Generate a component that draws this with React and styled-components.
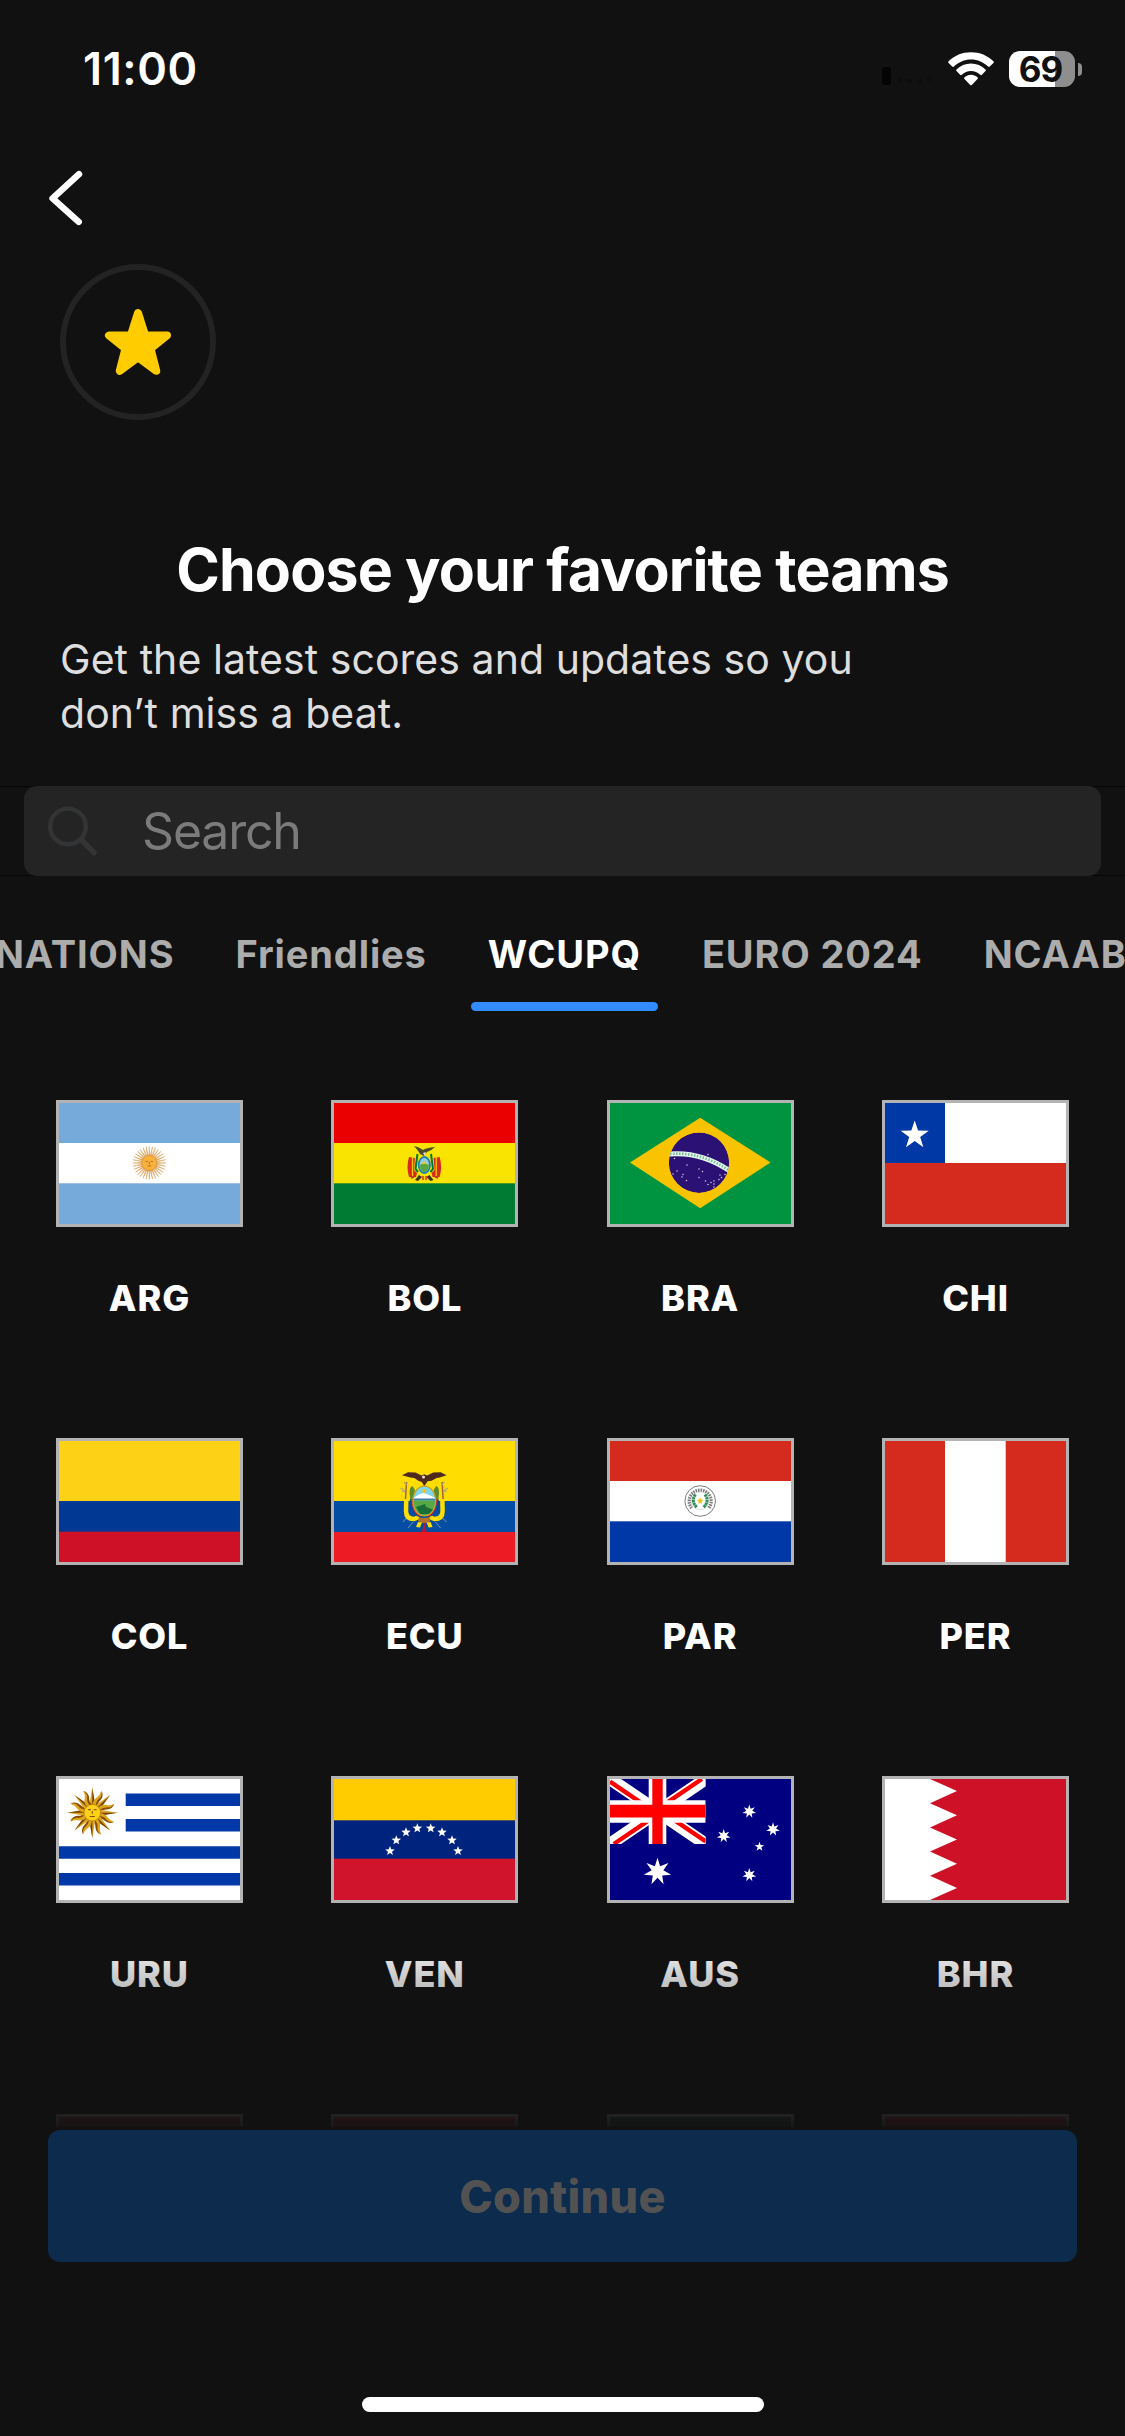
import styled, { createGlobalStyle, css } from "styled-components";

const GlobalStyle = createGlobalStyle`
  * {
    box-sizing: border-box;
  }
  body {
    margin: 0;
    background: #111111;
    font-family: Inter, "Liberation Sans", sans-serif;
  }
`;

const Screen = styled.div`
  display: flex;
  flex-direction: column;
  width: 1125px;
  height: 2436px;
  overflow: hidden;
  background: #111111;
  color: #ffffff;
`;

const StatusBar = styled.header`
  display: flex;
  align-items: center;
  justify-content: space-between;
  height: 138px;
  flex: none;
  padding: 0 43px 0 83px;
`;

const Time = styled.div`
  font-size: 45px;
  font-weight: 600;
  line-height: 54px;
  letter-spacing: 0.6px;
`;

const StatusIcons = styled.div`
  display: flex;
  align-items: center;
`;

const Battery = styled.div`
  display: flex;
  align-items: center;
  justify-content: center;
  width: 66px;
  height: 36px;
  margin-left: 15px;
  padding-right: 3px;
  border-radius: 11px;
  background: linear-gradient(to right, #ffffff 46px, #8e8e8e 46px);
  color: #111111;
  font-size: 35px;
  font-weight: 700;
  line-height: 36px;
  letter-spacing: -1px;
`;

const BatteryNub = styled.div`
  width: 4px;
  height: 13px;
  margin-left: 3px;
  border-radius: 0 4px 4px 0;
  background: #8e8e8e;
`;

const NavRow = styled.nav`
  display: flex;
  align-items: center;
  height: 120px;
  flex: none;
  padding-left: 45px;
`;

const StarBadge = styled.div`
  display: flex;
  align-items: center;
  justify-content: center;
  width: 156px;
  height: 156px;
  flex: none;
  margin: 6px 0 0 60px;
  border: 6px solid #232323;
  border-radius: 50%;
`;

const Title = styled.h1`
  margin: 114px 0 0;
  text-align: center;
  font-size: 59px;
  font-weight: 700;
  line-height: 72px;
  letter-spacing: -0.85px;
  white-space: nowrap;
`;

const Subtitle = styled.p`
  width: 840px;
  margin: 26px 0 0 60px;
  color: #dedede;
  font-size: 41px;
  font-weight: 400;
  line-height: 54px;
  letter-spacing: 0.05px;
`;

const SearchRow = styled.div`
  flex: none;
  height: 90px;
  margin-top: 46px;
  padding: 0 24px;
  background: linear-gradient(#060606 0 1px, #111111 1px 89px, #060606 89px);
`;

const SearchField = styled.div`
  display: flex;
  align-items: center;
  gap: 44px;
  height: 90px;
  padding-left: 23px;
  border-radius: 13px;
  background: #242424;
  color: #7b7b7b;
  font-size: 50px;
  line-height: 90px;
  letter-spacing: -1.2px;
`;

const Tabs = styled.div`
  display: flex;
  gap: 27px;
  flex: none;
  height: 88px;
  margin: 47px 0 0 -22px;
`;

const Tab = styled.div`
  display: flex;
  flex-direction: column;
  justify-content: space-between;
  align-items: center;
  flex: none;
  padding: 0 17px;
  color: #acacac;
  font-size: 38px;
  font-weight: 700;
  line-height: 62px;
  letter-spacing: 0.9px;
  white-space: nowrap;
  ${({ $active }) =>
    $active &&
    css`
      color: #ffffff;
      &::after {
        content: "";
        align-self: stretch;
        height: 9px;
        margin: 0 -17px;
        border-radius: 5px;
        background: #328cff;
      }
    `}
`;

const TeamList = styled.main`
  position: relative;
  flex: none;
  height: 1119px;
  padding: 89px 56px 0;
  overflow: hidden;
  &::after {
    content: "";
    position: absolute;
    left: 0;
    right: 0;
    bottom: 0;
    height: 196px;
    background: linear-gradient(rgba(17, 17, 17, 0), rgba(17, 17, 17, 0.96) 193px, #111111 193px);
  }
`;

const TeamGrid = styled.div`
  display: grid;
  grid-template-columns: repeat(4, 187px);
  grid-auto-rows: 338px;
  justify-content: space-between;
`;

const Team = styled.div`
  display: flex;
  flex-direction: column;
  align-items: center;
`;

const TeamName = styled.div`
  margin-top: 51px;
  font-size: 36px;
  font-weight: 800;
  line-height: 40px;
  letter-spacing: 0.9px;
`;

const Footer = styled.footer`
  display: flex;
  flex-direction: column;
  align-items: center;
  justify-content: space-between;
  flex: 1;
  padding: 0 48px 24px;
`;

const ContinueButton = styled.button`
  width: 100%;
  height: 132px;
  border: 0;
  border-radius: 12px;
  background: #0d2b4d;
  color: #525252;
  font: inherit;
  font-size: 45px;
  font-weight: 800;
  letter-spacing: 0.3px;
`;

const HomeIndicator = styled.div`
  width: 402px;
  height: 15px;
  border-radius: 8px;
  background: #ffffff;
`;

const starPoints = (cx, cy, outer, inner, tips = 5) =>
  Array.from({ length: tips * 2 }, (_, i) => {
    const r = i % 2 ? inner : outer;
    const a = (Math.PI * i) / tips - Math.PI / 2;
    return `${(cx + r * Math.cos(a)).toFixed(2)},${(cy + r * Math.sin(a)).toFixed(2)}`;
  }).join(" ");

const Star = ({ x, y, r, inner = r * 0.39, tips = 5, fill = "#fff" }) => (
  <polygon points={starPoints(x, y, r, inner, tips)} fill={fill} />
);

const Bands = ({ colors, stops }) =>
  colors.map((fill, i) => (
    <rect key={i} x="0" y={stops[i]} width="187" height={127 - stops[i]} fill={fill} />
  ));

const Argentina = () => (
  <>
    <Bands colors={["#75aadb", "#ffffff", "#75aadb"]} stops={[0, 43, 83.3]} />
    {Array.from({ length: 32 }, (_, i) => (
      <path
        key={i}
        d="M92.8 56L93.3 46.5L93.8 56Z"
        fill="#e0a050"
        stroke="#e0a565"
        strokeWidth="0.5"
        transform={`rotate(${i * 11.25} 93.3 63)`}
      />
    ))}
    <circle cx="93.3" cy="63" r="7.6" fill="#f8b23c" stroke="#d99a45" strokeWidth="1" />
    <path d="M89.6 61.4h2.4M94.6 61.4h2.4M93.3 62v2.4M91.4 66h3.8" stroke="#b5702a" strokeWidth="1" />
  </>
);

const Bolivia = () => (
  <>
    <Bands colors={["#ea0000", "#f9e300", "#007b33"]} stops={[0, 43, 83.3]} />
    <path d="M78 57q-3 10 0 20h7l1-4-3-3 1-12z" fill="#d52b1e" />
    <path d="M108.6 57q3 10 0 20h-7l-1-4 3-3-1-12z" fill="#d52b1e" />
    <path d="M81.5 57v19M105.2 57v19" stroke="#f9c800" strokeWidth="1.3" />
    <path d="M86.5 54l-2 15 2.5 3M100 54l2 15-2.5 3" stroke="#007b33" strokeWidth="2" fill="none" />
    <path d="M83 46q5 1 9 4 3-2 12-3-4 4-8 5l-3 4-4-2q-2-4-6-8z" fill="#4b4a2c" />
    <path d="M92 53l3-1-1 4z" fill="#e8e8e8" />
    <ellipse cx="93.3" cy="65" rx="6.5" ry="9" fill="#1d7fb8" />
    <ellipse cx="93.3" cy="65" rx="4.8" ry="7" fill="#8fd0e8" />
    <path d="M88.7 65q4-3 9.2 0-.5 7-4.6 7t-4.6-7z" fill="#58a63c" />
    <path d="M90 64l3-3 3 3z" fill="#e9c832" />
    <path d="M84 80l4-5 3 2-4 4zM102.5 80l-4-5-3 2 4 4z" fill="#3c3420" />
    <path d="M92 76v4M95 76v4M80 78l3-1M107 78l-3-1" stroke="#d52b1e" strokeWidth="1.5" />
  </>
);

const brazilStars = [
  [67.5, 58.5], [70, 71], [66, 74], [76, 74.5], [80, 65], [79.5, 80.5], [75, 77], [92, 69], [95.5, 71.5],
  [92, 77.5], [98.5, 81], [101, 84.5], [104, 82.5], [107, 81], [107, 84], [107, 87], [113, 75], [114.5, 77.5],
  [112, 79.5], [118, 74.5], [101, 54.5],
];

const Brazil = () => (
  <>
    <rect width="187" height="127" fill="#009440" />
    <polygon points="23,62.5 93.2,17.7 163.5,62.5 93.2,108.3" fill="#fac300" />
    <clipPath id="globe">
      <circle cx="92" cy="62.7" r="30.2" />
    </clipPath>
    <g clipPath="url(#globe)">
      <circle cx="92" cy="62.7" r="30.2" fill="#2b1173" />
      <path d="M60 54.2Q94 50.5 124 71.8" fill="none" stroke="#e9f5ee" strokeWidth="5" />
      <path
        d="M60 54.2Q94 50.5 124 71.8"
        fill="none"
        stroke="#6fbf95"
        strokeWidth="2.6"
        strokeDasharray="1.5 1.5"
      />
    </g>
    {brazilStars.map(([x, y]) => (
      <circle key={`${x}-${y}`} cx={x} cy={y} r="0.75" fill="#d8d0ee" />
    ))}
  </>
);

const Chile = () => (
  <>
    <Bands colors={["#ffffff", "#d52b1e"]} stops={[0, 63]} />
    <rect width="63" height="63" fill="#0039a6" />
    <Star x={32.7} y={35.2} r={14.8} />
  </>
);

const Colombia = () => (
  <Bands colors={["#fcd116", "#003893", "#ce1126"]} stops={[0, 63, 93.7]} />
);

const Ecuador = () => (
  <>
    <Bands colors={["#ffdd00", "#034ea2", "#ed1c24"]} stops={[0, 63, 94]} />
    <path d="M82 84l-5 6M104.5 84l5 6M76 79l-4 5M110.5 79l5 5" stroke="#8899aa" strokeWidth="0.9" />
    <path
      d="M75.5 50l-.5 23q0 8 8 8l5-2M111.1 50l.5 23q0 8-8 8l-5-2"
      fill="none"
      stroke="#ffdd00"
      strokeWidth="4.5"
    />
    <path d="M80.5 60q-4 13 8 18M106 60q4 13-8 18" fill="none" stroke="#034ea2" strokeWidth="2.2" />
    <path d="M81.5 60q0 14 8 18M105 60q0 14-8 18" fill="none" stroke="#e01b2a" strokeWidth="2.4" />
    <path d="M78.5 55q0-6 3-7l2.5 4-2 9-2.5 1zM108.1 55q0-6-3-7l-2.5 4 2 9 2.5 1z" fill="#5d8a2d" />
    <path d="M75.5 44l-1 17M111.1 44l1 17" stroke="#a5623a" strokeWidth="1.5" />
    <path
      d="M69.5 50l5 3M117.1 50l-5 3M73 44l3 3M113.6 44l-3 3M71 53l3 1M115.6 53l-3 1"
      stroke="#a9a58a"
      strokeWidth="1.1"
    />
    <path
      d="M71 37.3l6-3 7.5 .3 6 2.8 2.8-1.2 2.8 1.2 6-2.8 7.5-.3 6 3-7 2.2-3 .4-5 2.8-4 .5-3.3 5-2.5-4.3-3.5-1.2-4-2.8-4-.4z"
      fill="#4e2a1c"
    />
    <circle cx="92.5" cy="39" r="1.6" fill="#e8d9c8" />
    <ellipse cx="93.3" cy="63" rx="12" ry="15.5" fill="#c9a11d" />
    <clipPath id="shield">
      <ellipse cx="93.3" cy="63" rx="10.7" ry="14.2" />
    </clipPath>
    <g clipPath="url(#shield)">
      <rect x="80" y="48" width="27" height="32" fill="#7fd6ee" />
      <path d="M80 61l9-5 4-1 5 2 9 4z" fill="#ffffff" />
      <rect x="80" y="60.5" width="27" height="2" fill="#3e7fa8" />
      <rect x="80" y="62.5" width="27" height="18" fill="#57a943" />
      <path d="M85 69l9-3 1 3 8 3-2 4H89z" fill="#186e35" />
      <circle cx="93.3" cy="53" r="2" fill="#f2c31b" />
    </g>
    <path d="M88 79q5 2 10.5 0l1 4-4 2h-4.5l-4-2z" fill="#b5702a" />
    <path d="M87 84l-2 5 4 .5 2-5zM99.6 84l2 5-4 .5-2-5z" fill="#ffdd00" />
    <path d="M93.3 84l-2.5 10h5z" fill="#b01a36" />
  </>
);

const Paraguay = () => (
  <>
    <Bands colors={["#d52b1e", "#ffffff", "#0038a8"]} stops={[0, 43, 83.3]} />
    <circle cx="93.2" cy="63" r="15.3" fill="#ffffff" stroke="#6e6e6e" strokeWidth="0.9" />
    <path
      d="M84.7 70.1A11 11 0 1 1 101.7 70.1"
      fill="none"
      stroke="#7c7c7c"
      strokeWidth="3.2"
      strokeDasharray="1.6 0.9"
    />
    <circle cx="93.2" cy="63" r="8.8" fill="#ffffff" stroke="#c0c0c0" strokeWidth="0.5" />
    <path
      d="M88.5 56.5q-5 6.5 1.5 13M97.9 56.5q5 6.5-1.5 13"
      fill="none"
      stroke="#2f8f5b"
      strokeWidth="3"
      strokeDasharray="2.5 .4"
    />
    <Star x={93.2} y={63} r={3.4} inner={1.7} fill="#f2c31b" />
  </>
);

const Peru = () => (
  <>
    <rect width="187" height="127" fill="#d52b1e" />
    <rect x="63" width="60.7" height="127" fill="#ffffff" />
  </>
);

const Uruguay = () => (
  <>
    <rect width="187" height="127" fill="#ffffff" />
    <path d="M69.7 23.7H187M69.7 49.3H187M0 76.4H187M0 103.3H187" stroke="#0038a8" strokeWidth="12.5" />
    {Array.from({ length: 8 }, (_, i) => (
      <g key={i}>
        <g transform={`rotate(${i * 45} 36.3 36.7)`}>
          <path d="M33.3 29.5L36.3 11.5L39.3 29.5Z" fill="#dba51c" />
          <path d="M36.3 29.5V11.5L39.3 29.5Z" fill="#7b3f00" />
        </g>
        <g transform={`rotate(${i * 45 + 22.5} 36.3 36.7)`}>
          <path d="M33.8 29.5q-2-5 1-9 2-3 1.5-7.5 4 4 2 9-2 4 .5 7.5z" fill="#dba51c" />
          <path d="M37 29.5q-2-5 .5-9 1.5-3-.8-7.5 4 4 2.3 9-2 4 .5 7.5z" fill="#8a4c05" />
        </g>
      </g>
    ))}
    <circle cx="36.3" cy="36.7" r="8.3" fill="#fcd116" stroke="#b57a12" strokeWidth="0.7" />
    <path d="M32 33.7h3M37.7 33.7h3M33.8 40.5h5M36.3 35v3" stroke="#8a4c05" strokeWidth="1" />
  </>
);

const venezuelaStars = [
  [59, 75], [65.3, 64.3], [75, 56.3], [86.3, 52.3],
  [99.7, 52.3], [111, 56.3], [121, 64.3], [127, 75],
];

const Venezuela = () => (
  <>
    <Bands colors={["#ffcc00", "#00247d", "#cf142b"]} stops={[0, 44.3, 82.7]} />
    {venezuelaStars.map(([x, y]) => (
      <Star key={x} x={x} y={y} r={5} inner={2.1} />
    ))}
  </>
);

const Australia = () => (
  <>
    <rect width="187" height="127" fill="#000080" />
    <clipPath id="canton">
      <rect x="3" y="3" width="95.7" height="65" />
    </clipPath>
    <g clipPath="url(#canton)">
      <path d="M3 3L98.7 68M98.7 3L3 68" stroke="#ffffff" strokeWidth="12.5" />
      <path
        d="M3 5.6L50.8 38.1M50.8 32.9L98.7 65.4M50.8 32.9L94.9 3M50.8 38.1L6.8 68"
        stroke="#ff0000"
        strokeWidth="4.3"
      />
      <path d="M50.5 3V68" stroke="#ffffff" strokeWidth="17.6" />
      <path d="M3 35.5H98.7" stroke="#ffffff" strokeWidth="22.4" />
      <path d="M50.5 3V68" stroke="#ff0000" strokeWidth="10.4" />
      <path d="M3 35.1H98.7" stroke="#ff0000" strokeWidth="12.6" />
    </g>
    <Star x={50.5} y={95.7} r={14} inner={6} tips={7} />
    <Star x={142.3} y={35.5} r={7} inner={3.1} tips={7} />
    <Star x={166} y={53.3} r={7} inner={3.1} tips={7} />
    <Star x={116.7} y={60} r={7} inner={3.1} tips={7} />
    <Star x={142.3} y={99} r={7} inner={3.1} tips={7} />
    <Star x={152.5} y={70.7} r={5} />
  </>
);

const Bahrain = () => (
  <>
    <rect width="187" height="127" fill="#ffffff" />
    <path
      d="M187 3H48L75 15.1L48 27.2L75 39.3L48 51.4L75 63.5L48 75.6L75 87.7L48 99.8L75 111.9L48 124H187Z"
      fill="#ce1126"
    />
  </>
);

const plain = (color) => () => <rect width="187" height="127" fill={color} />;

const teams = [
  { name: "ARG", Artwork: Argentina },
  { name: "BOL", Artwork: Bolivia },
  { name: "BRA", Artwork: Brazil },
  { name: "CHI", Artwork: Chile },
  { name: "COL", Artwork: Colombia },
  { name: "ECU", Artwork: Ecuador },
  { name: "PAR", Artwork: Paraguay },
  { name: "PER", Artwork: Peru },
  { name: "URU", Artwork: Uruguay },
  { name: "VEN", Artwork: Venezuela },
  { name: "AUS", Artwork: Australia },
  { name: "BHR", Artwork: Bahrain },
];

// only the top edge of this row shows above the button
const nextTeams = [
  { id: "next-1", Artwork: plain("#a03038") },
  { id: "next-2", Artwork: plain("#de2030") },
  { id: "next-3", Artwork: plain("#2c5c40") },
  { id: "next-4", Artwork: plain("#d01030") },
];

const tabs = ["NATIONS", "Friendlies", "WCUPQ", "EURO 2024", "NCAAB"];

const Flag = ({ children }) => (
  <svg width="187" height="127" viewBox="0 0 187 127">
    {children}
    <rect x="1.5" y="1.5" width="184" height="124" fill="none" stroke="#b3b3b3" strokeWidth="3" />
  </svg>
);

const SignalIcon = () => (
  <svg width="66" height="36" viewBox="0 0 66 36">
    <rect x="0" y="16" width="9" height="18" rx="3" fill="#040404" />
    <path d="M15 29h5M25 30h5M35 30h5M45 28h5" stroke="#0d0d0d" strokeWidth="4" />
  </svg>
);

const WifiIcon = () => (
  <svg width="46" height="34" viewBox="0 0 46 34">
    <g fill="#ffffff">
      <path d="M23 .3C14.3 .3 6.3 3.6 .6 9.3a1.2 1.2 0 0 0 0 1.7l3.6 3.6a1.2 1.2 0 0 0 1.7 0C10.3 10.2 16.4 7.5 23 7.5s12.7 2.7 17.1 7.1a1.2 1.2 0 0 0 1.7 0l3.6-3.6a1.2 1.2 0 0 0 0-1.7C39.7 3.6 31.7 .3 23 .3z" />
      <path d="M23 11.6c-5.7 0-10.7 2.2-14.5 5.8a1.2 1.2 0 0 0 0 1.7l3.6 3.6a1.2 1.2 0 0 0 1.7 0c2.4-2.3 5.7-3.7 9.2-3.7s6.8 1.4 9.2 3.7a1.2 1.2 0 0 0 1.7 0l3.6-3.6a1.2 1.2 0 0 0 0-1.7C33.7 13.8 28.7 11.6 23 11.6z" />
      <path d="M23 22.8c-2.5 0-4.7.9-6.5 2.4a1.2 1.2 0 0 0 0 1.8l5.7 5.9a1.2 1.2 0 0 0 1.6 0l5.7-5.9a1.2 1.2 0 0 0 0-1.8c-1.8-1.5-4-2.4-6.5-2.4z" />
    </g>
  </svg>
);

const BackIcon = () => (
  <svg width="42" height="60" viewBox="0 0 42 60">
    <path
      d="M34 6.2L7.6 30.3L33.7 53.8"
      fill="none"
      stroke="#ffffff"
      strokeWidth="6.5"
      strokeLinecap="round"
      strokeLinejoin="round"
    />
  </svg>
);

const FavoriteIcon = () => (
  <svg width="68" height="68" viewBox="0 0 68 68">
    <path
      d="M34 5L41.1 27.4H63L46.5 40.5L52.2 62.8L34 49.2L15.8 62.8L21.5 40.5L5 27.4H26.9Z"
      fill="#ffcc00"
      stroke="#ffcc00"
      strokeWidth="8"
      strokeLinejoin="round"
    />
  </svg>
);

const SearchIcon = () => (
  <svg width="51" height="51" viewBox="0 0 51 51" fill="none" stroke="#333435" strokeLinecap="round">
    <circle cx="21" cy="20.4" r="17.8" strokeWidth="4.4" />
    <path d="M34.5 34L47 46.6" strokeWidth="5.6" />
  </svg>
);

const App = () => (
  <Screen>
    <GlobalStyle />
    <StatusBar>
      <Time>11:00</Time>
      <StatusIcons>
        <SignalIcon />
        <WifiIcon />
        <Battery>69</Battery>
        <BatteryNub />
      </StatusIcons>
    </StatusBar>
    <NavRow>
      <BackIcon />
    </NavRow>
    <StarBadge>
      <FavoriteIcon />
    </StarBadge>
    <Title>Choose your favorite teams</Title>
    <Subtitle>
      Get the latest scores and updates so you
      <br />
      don’t miss a beat.
    </Subtitle>
    <SearchRow>
      <SearchField>
        <SearchIcon />
        Search
      </SearchField>
    </SearchRow>
    <Tabs>
      {tabs.map((label) => (
        <Tab key={label} $active={label === "WCUPQ"}>
          {label}
        </Tab>
      ))}
    </Tabs>
    <TeamList>
      <TeamGrid>
        {teams.map(({ name, Artwork }) => (
          <Team key={name}>
            <Flag>
              <Artwork />
            </Flag>
            <TeamName>{name}</TeamName>
          </Team>
        ))}
        {nextTeams.map(({ id, Artwork }) => (
          <Team key={id}>
            <Flag>
              <Artwork />
            </Flag>
          </Team>
        ))}
      </TeamGrid>
    </TeamList>
    <Footer>
      <ContinueButton disabled>Continue</ContinueButton>
      <HomeIndicator />
    </Footer>
  </Screen>
);

export default App;
